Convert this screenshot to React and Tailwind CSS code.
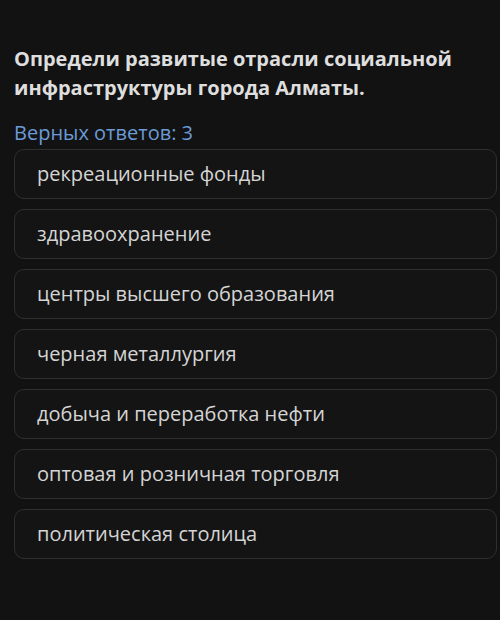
export default function App() {
  const items = [
    "рекреационные фонды",
    "здравоохранение",
    "центры высшего образования",
    "черная металлургия",
    "добыча и переработка нефти",
    "оптовая и розничная торговля",
    "политическая столица",
  ];
  return (
    <div className="w-[500px] h-[620px] bg-[#121212] overflow-hidden" style={{ fontFamily: '"Open Sans", "Noto Sans", sans-serif' }}>
      <div className="pl-[14px] pr-[3px] pt-[44px]">
        <h1 className="text-[20px] leading-[29px] font-bold text-[#dedede]">
          Определи развитые отрасли социальной инфраструктуры города Алматы.
        </h1>
        <div className="mt-[18px] text-[20px] leading-[26px] text-[#6b9bd6]">Верных ответов: 3</div>
        <div className="mt-[3px] flex flex-col gap-[10px]">
          {items.map((t) => (
            <div key={t} className="h-[50px] rounded-[10px] border border-[#2f2f2f] bg-[#141414] flex items-center pl-[22px] text-[20px] text-[#d4d4d4]">
              {t}
            </div>
          ))}
        </div>
      </div>
    </div>
  );
}
